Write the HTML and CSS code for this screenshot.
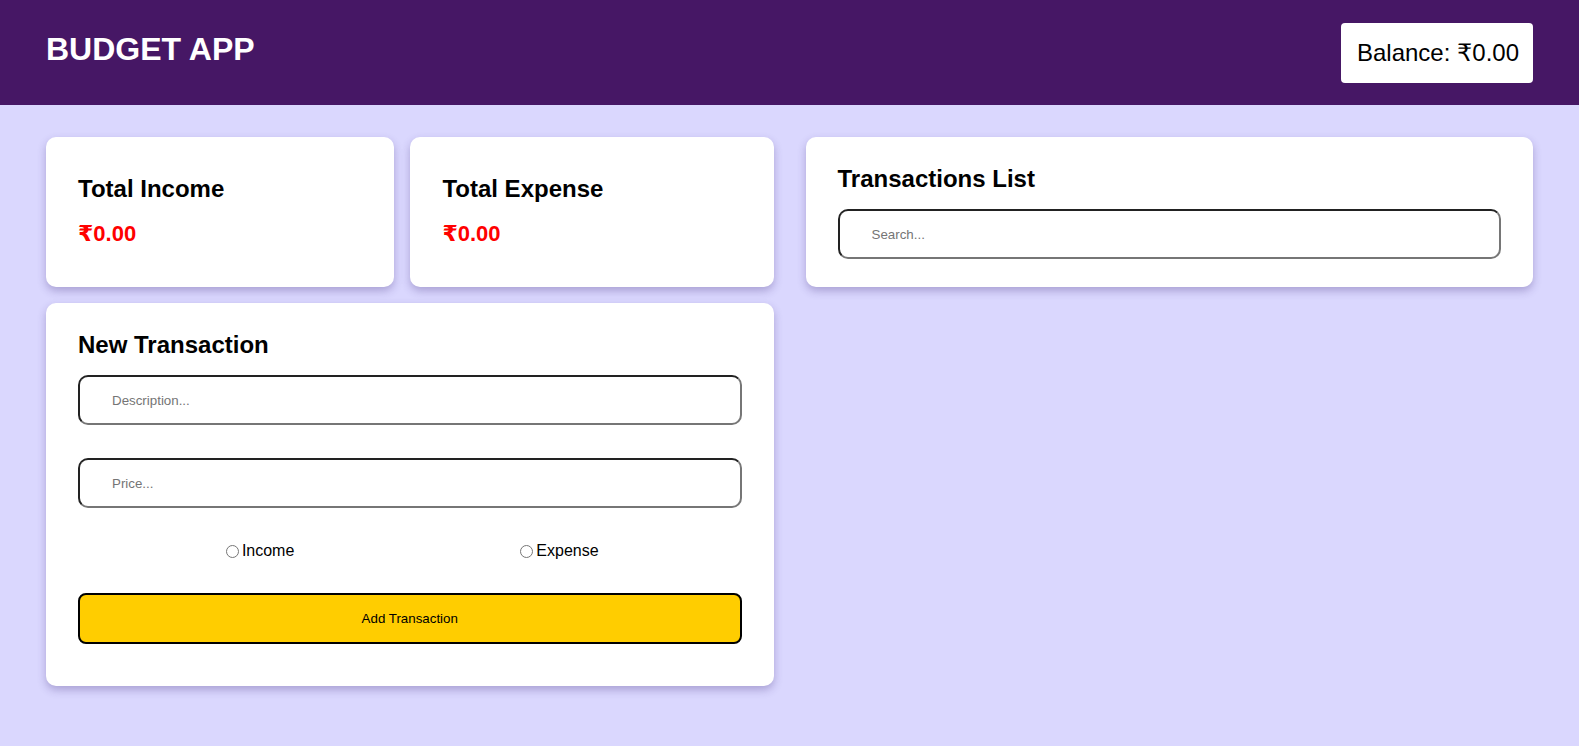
FILE: index.html
```html
<!DOCTYPE html>
<html lang="en">
<head>
<meta charset="utf-8">
<title>Budget App</title>
<link rel="stylesheet" href="styles.css">
</head>
<body>
<header class="topbar">
  <h1 class="brand">BUDGET APP</h1>
  <div class="balance">Balance: ₹0.00</div>
</header>
<main class="layout">
  <div class="stats">
    <section class="card stat">
      <h3 class="card-title">Total Income</h3>
      <p class="amount">₹0.00</p>
    </section>
    <section class="card stat">
      <h3 class="card-title">Total Expense</h3>
      <p class="amount">₹0.00</p>
    </section>
  </div>
  <section class="card list">
    <h3 class="card-title tight">Transactions List</h3>
    <input class="field" type="text" placeholder="Search...">
  </section>
  <section class="card form">
    <h3 class="card-title tight">New Transaction</h3>
    <input class="field" type="text" placeholder="Description...">
    <input class="field gap" type="text" placeholder="Price...">
    <div class="types">
      <label class="type"><input type="radio" name="type">Income</label>
      <label class="type"><input type="radio" name="type">Expense</label>
    </div>
    <button class="add" type="button">Add Transaction</button>
  </section>
</main>
</body>
</html>
```

FILE: styles.css
```css
* { box-sizing: border-box; }
html, body { margin: 0; padding: 0; }
body {
  background: #dad7fe;
  font-family: "Liberation Sans", Arial, "DejaVu Sans", sans-serif;
  color: #000;
  min-height: 746px;
}
.topbar {
  height: 105px;
  background: #461765;
  display: flex;
  align-items: center;
  justify-content: space-between;
  padding: 0 46px;
}
.brand {
  margin: 0 0 6px;
  color: #fff;
  font-size: 32px;
  line-height: 37px;
  font-weight: bold;
}
.balance {
  background: #fff;
  border-radius: 4px;
  padding: 16px 14px 16px 16px;
  font-size: 24px;
  line-height: 28px;
}
.layout {
  display: grid;
  grid-template-columns: 1fr 1fr;
  column-gap: 32px;
  row-gap: 16px;
  align-items: stretch;
  padding: 32px 46px;
}
.stats {
  display: flex;
  gap: 16px;
}
.card {
  background: #fff;
  border-radius: 10px;
  box-shadow: 0 4px 8px rgba(60, 40, 120, 0.3);
}
.stat {
  flex: 1 1 auto;
  padding: 38px 32px 28px;
}
.card-title {
  margin: 0 0 19px;
  font-size: 24px;
  line-height: 28px;
  font-weight: bold;
}
.card-title.tight {
  margin-bottom: 16px;
  padding-top: 2px;
}
.amount {
  margin: 0;
  color: #ff0000;
  font-size: 22px;
  line-height: 24px;
  font-weight: bold;
}
.list {
  padding: 26px 32px 28px;
  display: flex;
  flex-direction: column;
}
.form {
  grid-column: 1;
  padding: 26px 32px 42px;
  display: flex;
  flex-direction: column;
}
.field {
  display: block;
  width: 100%;
  height: 50px;
  padding: 0 32px;
  border: 2px solid #222;
  border-right-color: #767676;
  border-bottom-color: #767676;
  border-radius: 10px;
  font-family: "Liberation Sans", Arial, sans-serif;
  font-size: 13.33px;
  color: #000;
  background: #fff;
  outline: none;
}
.field::placeholder { color: #757575; }
.field.gap { margin-top: 33px; }
.types {
  display: flex;
  justify-content: center;
  gap: 221px;
  margin: 34px 0 33px;
  font-size: 16px;
  line-height: 18px;
}
.type {
  display: flex;
  align-items: center;
}
.type input {
  width: 13px;
  height: 13px;
  margin: 0 3px 0 5px;
}
.add {
  display: block;
  width: 100%;
  height: 51px;
  background: #ffcd00;
  border: 2px solid #000;
  border-radius: 8px;
  font-family: "Liberation Sans", Arial, sans-serif;
  font-size: 13.33px;
  color: #000;
  cursor: pointer;
}
```
